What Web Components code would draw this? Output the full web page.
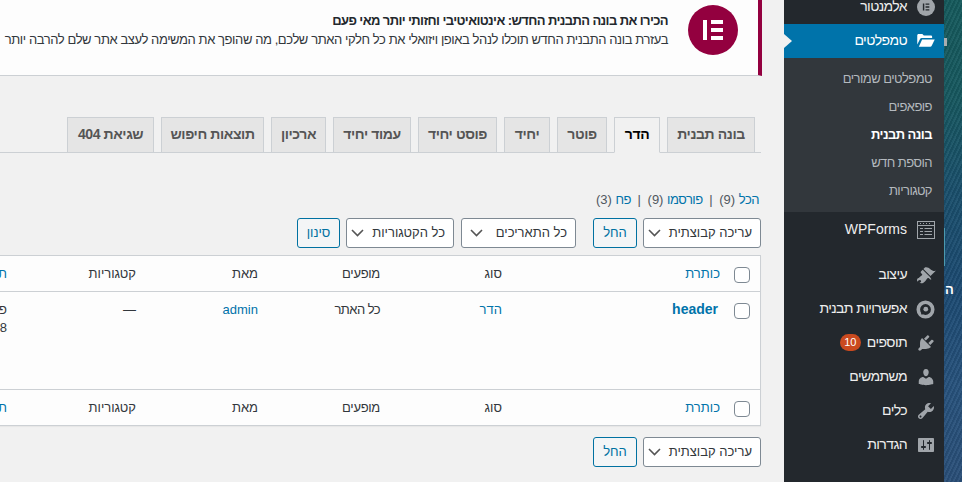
<!DOCTYPE html>
<html lang="he" dir="rtl">
<head>
<meta charset="utf-8">
<style>
html, body { margin: 0; height: 482px; overflow: hidden; }
body { font: 13px/1.4 "Liberation Sans", Arial, sans-serif; color: #32373c; background: #f1f1f1; }
</style>
</head>
<body>
<wp-shell>
  <wp-desktop-strip></wp-desktop-strip>
  <wp-sidebar></wp-sidebar>
  <wp-content>
    <wp-notice></wp-notice>
    <wp-tabs></wp-tabs>
    <wp-filters></wp-filters>
    <wp-toolbar filters></wp-toolbar>
    <wp-table></wp-table>
    <wp-toolbar></wp-toolbar>
  </wp-content>
</wp-shell>

<script>
const dash = (d, size = 20) => `<svg viewBox="0 0 20 20" width="${size}" height="${size}"><path fill="#a0a5aa" fill-rule="evenodd" d="${d}"/></svg>`

const icons = {
  elementor: `<svg viewBox="0 0 20 20" width="18" height="18"><circle cx="10" cy="10" r="10" fill="#a0a5aa"/><path fill="#23282d" d="M6.500 6h1.600v8H6.500zM9.500 6h4.200v1.600H9.500zM9.500 9.200h4.200v1.600H9.500zM9.500 12.400h4.200V14H9.500z"/></svg>`,
  folder: `<svg viewBox="0 0 20 16" width="18" height="14"><path fill="#fff" d="M0 1.500C0 .7.700 0 1.500 0h4.300l1.700 1.800h8c.8 0 1.500.6 1.500 1.400v1.300H5.200c-.9 0-1.600.4-2 1.200L0 12z"/><path fill="#fff" d="M5.600 6.200H20l-3.500 7.300c-.3.600-.9 1-1.600 1H1.800z"/></svg>`,
  forms: `<svg viewBox="0 0 18 18" width="18" height="18" fill="none" stroke="#a0a5aa"><rect x=".5" y=".5" width="17" height="17"/><path d="M1 4.500h16"/><path stroke-dasharray="1 2" d="M3 2.500h12"/><path d="M3 7.500h3M7.500 7.500h7.500M3 10.500h3M7.500 10.500h7.500M3 13.500h3M7.500 13.500h7.500"/></svg>`,
  brush: dash("M14.480 11.060L7.410 3.990l1.500-1.500c.5-.56 2.300-.47 3.510.32 1.210.8 1.430 1.280 2.910 2.100 1.180.64 2.450 1.260 4.450.85zm-.71.71L6.700 4.700 4.930 6.470c-.39.39-.39 1.020 0 1.410l1.060 1.060c.39.39.39 1.030 0 1.420-.6.6-1.430 1.110-2.210 1.690-.35.26-.7.53-1.010.84C1.430 13.230 1 14.100 1 15c0 .62.19 1.180.51 1.650.51-.85 1.340-1.510 2.260-1.530.24 0 .47.02.71.15.23.13.43.36.54.68.08.22.08.5.01.71-.07.22-.21.4-.36.55-.3.3-.69.49-1.140.56.47.31 1.030.49 1.640.49 1.530 0 2.420-.43 3.770-1.770.31-.31.58-.66.84-1.010.58-.78 1.090-1.610 1.690-2.210.39-.39 1.030-.39 1.420 0l1.060 1.060c.39.39 1.020.39 1.410 0z"),
  ring: `<svg viewBox="0 0 20 20" width="19" height="19"><circle cx="10" cy="10" r="7.600" fill="none" stroke="#a0a5aa" stroke-width="3.800"/><circle cx="10.300" cy="9.700" r="2.500" fill="#a0a5aa"/><path fill="#23282d" d="M5.400 12.600h2v2.600h-2z"/></svg>`,
  plug: dash("M13.110 4.360L9.870 7.600 8 5.730l3.240-3.240c.35-.34 1.050-.2 1.560.32.52.51.66 1.210.31 1.550zm-8 1.770l.91-1.120 9.010 9.010-1.190.84c-.71.71-2.630 1.160-3.820 1.160H6.140L4.900 17.260c-.59.59-1.540.59-2.120 0-.59-.58-.59-1.530 0-2.120l1.240-1.240v-3.880c0-1.130.4-3.190 1.090-3.890zm7.260 3.970l3.240-3.240c.34-.35 1.040-.21 1.550.31.52.51.66 1.210.31 1.550l-3.240 3.250z"),
  user: dash("M10 9.250c-2.270 0-2.730-3.440-2.730-3.440C7 4.020 7.820 2 9.970 2c2.160 0 2.980 2.020 2.710 3.810 0 0-.41 3.440-2.680 3.440zm0 2.570L12.720 10c2.390 0 4.520 2.330 4.520 4.530v2.490s-3.650 1.130-7.240 1.130c-3.650 0-7.240-1.130-7.240-1.130v-2.490c0-2.250 1.940-4.480 4.470-4.480z"),
  wrench: dash("M16.680 9.770c-1.340 1.340-3.300 1.670-4.950.99l-5.410 6.520c-.99.99-2.590.99-3.580 0s-.99-2.590 0-3.570l6.520-5.420c-.68-1.650-.35-3.610.99-4.950 1.280-1.280 3.120-1.620 4.720-1.060l-2.890 2.890 2.820 2.820 2.860-2.870c.53 1.580.18 3.390-1.080 4.650zM3.810 16.210c.4.39 1.040.39 1.430 0 .4-.4.4-1.040 0-1.430-.39-.4-1.030-.4-1.430 0-.39.39-.39 1.030 0 1.430z"),
  sliders: dash("M18 16V4c0-.55-.45-1-1-1H3c-.55 0-1 .45-1 1v12c0 .55.45 1 1 1h14c.55 0 1-.45 1-1zM8 11h1c.55 0 1 .45 1 1s-.45 1-1 1H8v1.500c0 .28-.22.5-.5.5s-.5-.22-.5-.5V13H6c-.55 0-1-.45-1-1s.45-1 1-1h1V5.500c0-.28.22-.5.5-.5s.5.22.5.5V11zm5-2h-1c-.55 0-1-.45-1-1s.45-1 1-1h1V5.500c0-.28.22-.5.5-.5s.5.22.5.5V7h1c.55 0 1 .45 1 1s-.45 1-1 1h-1v5.500c0 .28-.22.5-.5.5s-.5-.22-.5-.5V9z")
}

// simple helper so each element only has to declare its css and markup
class ShadowEl extends HTMLElement {
  constructor() {
    super()
    this.shadowDOM = this.attachShadow({mode: "open"})
  }
  connectedCallback() {
    this.shadowDOM.innerHTML = `<style>${this.css()}</style>${this.html()}`
  }
  css() { return "" }
  html() { return "<slot></slot>" }
}

class WpShell extends ShadowEl {
  css() { return `:host { display: flex; height: 482px; width: 962px; overflow: hidden; }` }
}

class WpDesktopStrip extends ShadowEl {
  css() { return `
    :host { display: block; flex: 0 0 18px; width: 18px; height: 482px; position: relative; overflow: hidden;
      background: linear-gradient(180deg, #155a5c 0, #17585f 20%, #1a4f6c 40%, #1c4a72 60%, #27527c 80%, #2a4f78 100%); }
    .tex { position: absolute; inset: 0;
      background: repeating-linear-gradient(115deg, rgba(255,255,255,.05) 0 1px, rgba(0,0,0,.07) 1px 3px, rgba(255,255,255,.03) 3px 4px); }
    .lab { position: absolute; left: 1px; top: 283px; color: #fff; font-size: 13px; font-weight: 700; line-height: 14px; }
    .mark { position: absolute; left: 0; top: 38px; width: 3px; height: 8px; background: #a9adb0; }
    .line { position: absolute; left: 0; top: 228px; width: 1px; height: 38px; background: #4a9ab0; }
  ` }
  html() { return `<div class="tex"></div><div class="mark"></div><div class="line"></div><div class="lab">ה</div>` }
}

class WpSidebar extends ShadowEl {
  css() { return `
    :host { display: block; flex: 0 0 160px; width: 160px; height: 482px; background: #23282d; color: #eee; overflow: hidden; }
    .top { height: 24px; display: flow-root; }
    .top .item { margin-top: -10px; }
    .item { display: flex; align-items: center; height: 34px; font-size: 14px; letter-spacing: -.6px; }
    .item .ic { flex: 0 0 37px; display: flex; justify-content: center; align-items: center; }
    .item .tx { white-space: nowrap; }
    .item.cur { background: #0073aa; color: #fff; position: relative; }
    .item.cur::after { content: ""; position: absolute; left: 0; top: 50%; margin-top: -7px;
      border: 7px solid transparent; border-left: 8px solid #f1f1f1; border-right-width: 0; }
    .sub { background: #32373c; padding: 7px 0; height: 140px; }
    .sub div { height: 28px; line-height: 28px; font-size: 13px; letter-spacing: -.55px; color: #b4b9be; padding-right: 12px; }
    .sub div.on { color: #fff; font-weight: 700; }
    .gap { height: 10px; }
    .badge { display: inline-block; background: #ca4a1f; color: #fff; font-size: 11px; letter-spacing: 0; line-height: 17px; width: 21px;
      border-radius: 9px; text-align: center; margin-right: 6px; vertical-align: 1px; }
    .forms { height: 36px; letter-spacing: 0; }
  ` }
  html() {
    const row = (ic, tx, extra = "") => `<div class="item ${extra}"><span class="ic">${icons[ic]}</span><span class="tx">${tx}</span></div>`
    return `
      <div class="top">${row("elementor", "אלמנטור")}</div>
      ${row("folder", "טמפלטים", "cur")}
      <div class="sub">
        <div>טמפלטים שמורים</div>
        <div>פופאפים</div>
        <div class="on">בונה תבנית</div>
        <div>הוספת חדש</div>
        <div>קטגוריות</div>
      </div>
      ${row("forms", "WPForms", "forms")}
      <div class="gap"></div>
      ${row("brush", "עיצוב")}
      ${row("ring", "אפשרויות תבנית")}
      ${row("plug", `תוספים<span class="badge">10</span>`)}
      ${row("user", "משתמשים")}
      ${row("wrench", "כלים")}
      ${row("sliders", "הגדרות")}
    `
  }
}

class WpContent extends ShadowEl {
  css() { return `:host { display: block; flex: 0 0 784px; width: 784px; height: 482px; overflow: hidden; background: #f1f1f1; }` }
}

class WpNotice extends ShadowEl {
  css() { return `
    :host { display: flex; align-items: flex-start; box-sizing: border-box; height: 76px; margin: 0 22px 0 -400px;
      background: #fdfdfd; border-right: 4px solid #93003f; border-bottom: 1px solid #ccd0d4; padding: 5px 20px 0 0; white-space: nowrap; }
    .logo { flex: 0 0 50px; height: 50px; border-radius: 50%; background: #93003f; display: flex; align-items: center; justify-content: center; margin-left: 20px; }
    h3 { margin: 0; font-size: 13px; line-height: 19px; font-weight: 700; color: #23282d; padding-top: 6px; letter-spacing: -.6px; }
    p { margin: 0; font-size: 13px; line-height: 19px; color: #32373c; letter-spacing: -.42px; }
  ` }
  html() { return `
    <div class="logo"><svg viewBox="0 0 20 20" width="20" height="20"><path fill="#fff" d="M0 0h4v20H0zM8 0h12v4H8zM8 8h12v4H8zM8 16h12v4H8z"/></svg></div>
    <div>
      <h3>הכירו את בונה התבנית החדש: אינטואיטיבי וחזותי יותר מאי פעם</h3>
      <p>בעזרת בונה התבנית החדש תוכלו לנהל באופן ויזואלי את כל חלקי האתר שלכם, מה שהופך את המשימה לעצב אתר שלם להרבה יותר</p>
    </div>
  ` }
}

class WpTabs extends ShadowEl {
  css() { return `
    :host { display: flex; gap: 7px; margin: 41px 23px 0 -200px; padding-right: 6px; height: 35px; border-bottom: 1px solid #ccd0d4; }
    a { display: block; box-sizing: border-box; height: 36px; line-height: 33px; text-align: center; border: 1px solid #ccd0d4; background: #e5e5e5;
      color: #555; font-size: 14px; font-weight: 700; letter-spacing: -.4px; white-space: nowrap; }
    a.on { background: #f1f1f1; color: #000; border-bottom-color: #f1f1f1; }
  ` }
  html() {
    const tabs = [["בונה תבנית", 88], ["הדר", 46], ["פוטר", 50], ["יחיד", 46], ["פוסט יחיד", 79], ["עמוד יחיד", 78], ["ארכיון", 55], ["תוצאות חיפוש", 103], ["שגיאת 404", 87]]
    return tabs.map(([t, w]) => `<a class="${t == "הדר" ? "on" : ""}" style="width:${w}px">${t}</a>`).join("")
  }
}

class WpFilters extends ShadowEl {
  css() { return `
    :host { display: block; margin: 38px 25px 0 0; height: 18px; line-height: 18px; font-size: 13px; color: #50575e; white-space: nowrap; }
    a { color: #0073aa; letter-spacing: -.5px; }
    i { font-style: normal; color: #50575e; padding: 0 3px; }
  ` }
  html() { return `<a>הכל</a> (9) <i>|</i> <a>פורסמו</a> (9) <i>|</i> <a>פח</a> (3)` }
}

class WpToolbar extends ShadowEl {
  css() { return `
    :host { display: flex; margin: 11px 23px 0 0; height: 30px; }
    :host([filters]) { margin-top: 9px; }
    .sel { box-sizing: border-box; height: 30px; border: 1px solid #7e8993; border-radius: 3px; background: #fff; color: #32373c;
      font-size: 13px; line-height: 28px; padding: 0 8px 0 0; display: flex; justify-content: space-between; align-items: center; white-space: nowrap; }
    .sel svg { flex: none; margin: 0 8px; }
    .btn { box-sizing: border-box; height: 30px; border: 1px solid #0071a1; border-radius: 3px; background: #f3f5f6; color: #0071a1;
      font-size: 13px; line-height: 28px; text-align: center; }
  ` }
  html() {
    const arrow = `<svg width="13" height="8" viewBox="0 0 13 8" fill="none" stroke="#555" stroke-width="1.600"><path d="M1 1l5.500 5.500L12 1"/></svg>`
    const sel = (t, w, side) => `<div class="sel" style="width:${w}px;${side}"><span>${t}</span>${arrow}</div>`
    const btn = (t, w) => `<div class="btn" style="width:${w}px">${t}</div>`
    let out = sel("עריכה קבוצתית", 118, "margin-left:6px") + btn("החל", 44)
    if (this.hasAttribute("filters"))
      out += sel("כל התאריכים", 115, "margin:0 17px 0 7px") + sel("כל הקטגוריות", 108, "margin-left:6px") + btn("סינון", 43)
    return out
  }
}

class WpTable extends ShadowEl {
  css() { return `
    :host { display: block; margin: 7px 23px 0 -120px; background: #fdfdfd; border: 1px solid #ccd0d4; border-left: 0; box-sizing: border-box; height: 171px; box-shadow: 0 1px 1px rgba(0,0,0,.04); }
    .row { display: grid; grid-template-columns: 30px 218px 122px 122px 122px 129px 120px; height: 35px; align-items: center; }
    .head { border-bottom: 1px solid #ccd0d4; }
    .foot { border-top: 1px solid #ccd0d4; }
    .body { height: 97px; align-items: start; }
    .row > div { padding-right: 10px; white-space: nowrap; font-size: 13px; color: #32373c; line-height: 18px; }
    .body > div { padding-top: 9px; }
    .body > div.t { padding-top: 8px; padding-right: 12px; }
    a { color: #0073aa; }
    .tight { letter-spacing: -.3px; }
    .body .tight { letter-spacing: -.55px; }
    .ttl { font-size: 14px; font-weight: 700; }
    .cb { display: block; box-sizing: border-box; width: 16px; height: 16px; border: 1px solid #7e8993; border-radius: 4px; background: #fff; margin-top: 2px; }
    .body .cb { margin-top: 3px; }
  ` }
  html() {
    const heads = cls => `<div class="row ${cls}">
      <div><span class="cb"></span></div>
      <div><a>כותרת</a></div><div>סוג</div><div class="tight">מופעים</div><div>מאת</div><div>קטגוריות</div><div><a>תאריך</a></div>
    </div>`
    return heads("head") + `<div class="row body">
      <div class="t"><span class="cb" style="margin-right:-2px"></span></div>
      <div class="t"><a class="ttl">header</a></div>
      <div><a>הדר</a></div>
      <div class="tight">כל האתר</div>
      <div><a>admin</a></div>
      <div>—</div>
      <div>פורסם<br>2020/07/28</div>
    </div>` + heads("foot")
  }
}

customElements.define("wp-shell", WpShell)
customElements.define("wp-desktop-strip", WpDesktopStrip)
customElements.define("wp-sidebar", WpSidebar)
customElements.define("wp-content", WpContent)
customElements.define("wp-notice", WpNotice)
customElements.define("wp-tabs", WpTabs)
customElements.define("wp-filters", WpFilters)
customElements.define("wp-toolbar", WpToolbar)
customElements.define("wp-table", WpTable)
</script>
</body>
</html>
